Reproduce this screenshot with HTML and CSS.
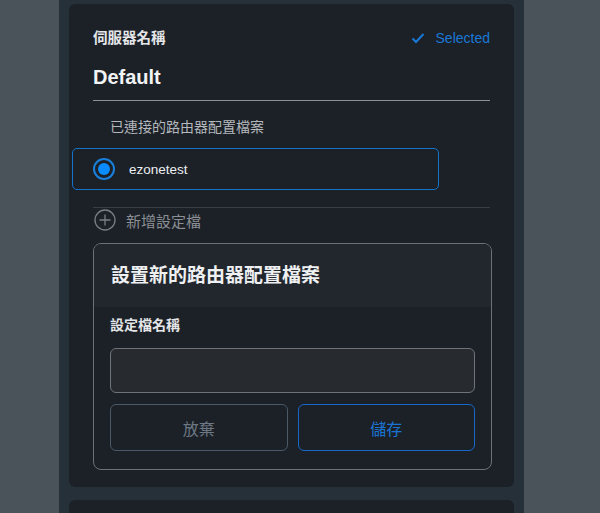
FILE: index.html
```html
<!DOCTYPE html>
<html lang="zh-Hant">
<head>
    <meta charset="UTF-8">
    <title>路由器配置檔案</title>
    <link rel="stylesheet" href="styles.css">
</head>
<body>
<div class="column">
    <section class="card">
        <div class="card-head">
            <span class="field-label">伺服器名稱</span>
            <span class="selected">
                <svg class="check" viewBox="0 0 14 12" width="14" height="12">
                    <path d="M1.5 6.5 L5 10 L12.5 2" fill="none" stroke="currentColor" stroke-width="2"/>
                </svg>
                Selected
            </span>
        </div>
        <h1 class="server-name">Default</h1>

        <p class="section-label">已連接的路由器配置檔案</p>
        <label class="profile-item">
            <span class="radio"><span class="radio-dot"></span></span>
            <span class="profile-name">ezonetest</span>
        </label>

        <div class="add-row">
            <svg class="plus" viewBox="0 0 22 22" width="22" height="22">
                <circle cx="11" cy="11" r="10" fill="none" stroke="currentColor" stroke-width="1.3"/>
                <path d="M11 5.5 V16.5 M5.5 11 H16.5" stroke="currentColor" stroke-width="1.3"/>
            </svg>
            <span>新增設定檔</span>
        </div>

        <div class="new-profile">
            <div class="new-profile-head">設置新的路由器配置檔案</div>
            <div class="new-profile-body">
                <div class="input-label">設定檔名稱</div>
                <input class="text-input" type="text">
                <div class="actions">
                    <button class="btn btn-cancel">放棄</button>
                    <button class="btn btn-save">儲存</button>
                </div>
            </div>
        </div>
    </section>
    <section class="card card-next"></section>
</div>
</body>
</html>
```

FILE: styles.css
```css
body {
    background: #4a5359;
    font-family: "Liberation Sans", "Noto Sans CJK TC", sans-serif;
    height: 513px;
    margin: 0;
    overflow: hidden;
}

.column {
    background: #263039;
    margin-left: 59px;
    min-height: 513px;
    padding: 4px 10px 0;
    width: 445px;
}

.card {
    background: #1c2128;
    border-radius: 6px;
    padding: 23px 24px 17px;
}

.card-next {
    height: 40px;
    margin-top: 13px;
    padding: 0;
}

.card-head {
    align-items: center;
    display: flex;
    justify-content: space-between;
}

.field-label {
    color: #e4e6e8;
    font-size: 14.5px;
    font-weight: bold;
    line-height: 22px;
}

.selected {
    align-items: center;
    color: #1a78d6;
    display: flex;
    font-size: 14px;
    gap: 11px;
    line-height: 22px;
}

.server-name {
    border-bottom: 1px solid #8a8f98;
    color: #f2f3f4;
    font-size: 20px;
    line-height: 26px;
    margin: 15px 0 0;
    padding-bottom: 10px;
}

.section-label {
    color: #b4b8bc;
    font-size: 14px;
    line-height: 20px;
    margin: 16px 0 0 17px;
}

.profile-item {
    align-items: center;
    border: 1px solid #1673c9;
    border-radius: 5px;
    box-sizing: border-box;
    display: flex;
    gap: 14px;
    height: 42px;
    margin: 11px 0 0 -21px;
    padding-left: 20px;
    width: 367px;
}

.radio {
    align-items: center;
    border: 2px solid #1a7fd9;
    border-radius: 50%;
    box-sizing: border-box;
    display: flex;
    height: 22px;
    justify-content: center;
    width: 22px;
}

.radio-dot {
    background: #0a8cff;
    border-radius: 50%;
    height: 12px;
    width: 12px;
}

.profile-name {
    color: #eceef0;
    font-size: 13.5px;
}

.add-row {
    align-items: center;
    border-top: 1px solid #393f47;
    color: #8b8f94;
    display: flex;
    font-size: 15px;
    gap: 10px;
    margin-top: 17px;
    padding-top: 1px;
}

.plus {
    color: #7a7e84;
    margin-left: 1px;
}

.new-profile {
    border: 1px solid #6b7079;
    border-radius: 8px;
    margin: 12px -2px 0 0;
    overflow: hidden;
}

.new-profile-head {
    background: #22272e;
    color: #eff0f2;
    font-size: 19px;
    font-weight: bold;
    height: 63px;
    line-height: 63px;
    padding-left: 17px;
}

.new-profile-body {
    padding: 8px 16px 18px 16px;
}

.input-label {
    color: #e4e6e8;
    font-size: 14px;
    font-weight: bold;
    line-height: 20px;
}

.text-input {
    background: #272b30;
    border: 1px solid #6e7279;
    border-radius: 6px;
    box-sizing: border-box;
    display: block;
    height: 45px;
    margin-top: 13px;
    width: 100%;
}

.actions {
    display: flex;
    gap: 10px;
    margin-top: 11px;
}

.btn {
    background: transparent;
    border-radius: 6px;
    flex: 1;
    font-family: "Liberation Sans", "Noto Sans CJK TC", sans-serif;
    font-size: 16px;
    height: 47px;
}

.btn-cancel {
    border: 1px solid #4a5868;
    color: #6c7883;
}

.btn-save {
    border: 1px solid #1469cb;
    color: #1a74d4;
}
```
